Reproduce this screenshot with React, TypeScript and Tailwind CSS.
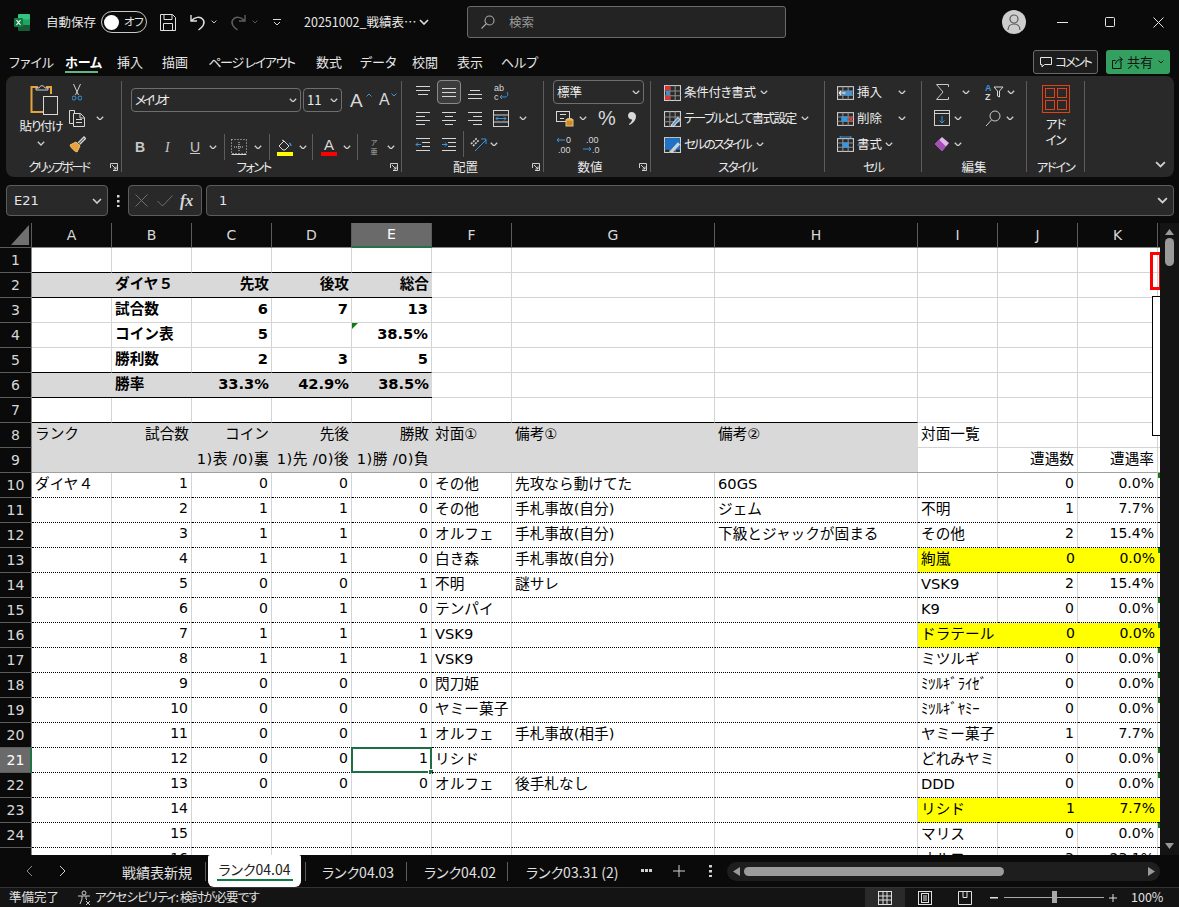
import React from 'react';

const LINE = '#d6d6d6';
const BLUE = '#3a96dd';

function Chev({ className = '', color = '#d0d0d0', w = 8 }: { className?: string; color?: string; w?: number }) {
  return (
    <svg width={w} height={w * 0.6} viewBox="0 0 10 6" className={`shrink-0 ${className}`} fill="none" stroke={color} strokeWidth="1.6">
      <path d="M1 1l4 4 4-4" />
    </svg>
  );
}

function I({ children, size = 16, className = '' }: { children: React.ReactNode; size?: number; className?: string }) {
  return (
    <svg width={size} height={size} viewBox="0 0 16 16" fill="none" stroke={LINE} strokeWidth="1" className={`shrink-0 ${className}`}>
      {children}
    </svg>
  );
}

function Launcher() {
  return (
    <svg width="8" height="8" viewBox="0 0 8 8" fill="none" stroke="#d0d0d0" className="absolute right-[3px] top-[6px]">
      <path d="M.5 5V.5H7.5V7.5H3M2 2l4 4M6 3.5V6H3.5" />
    </svg>
  );
}

function Sep({ className = '' }: { className?: string }) {
  return <div className={`w-px bg-[#5c5c5c] shrink-0 ${className}`} />;
}

function Group({ w, label, ls = '', launcher, children }: { w: string; label: string; ls?: string; launcher?: boolean; children: React.ReactNode }) {
  return (
    <div className={`flex shrink-0 ${w}`}>
      <div className="flex flex-col flex-1 min-w-0">
        <div className="h-[81px] pt-[3px] flex flex-col">{children}</div>
        <div className="h-[20px] relative flex items-center justify-center text-[12.5px] text-[#e8e8e8]">
          <span className={ls}>{label}</span>
          {launcher && <Launcher />}
        </div>
      </div>
      <Sep className="my-[5px]" />
    </div>
  );
}

function Row({ children, className = '' }: { children: React.ReactNode; className?: string }) {
  return <div className={`flex items-center h-[26px] shrink-0 ${className}`}>{children}</div>;
}

function AlignIcon({ y, x }: { y: number[]; x: [number, number][] }) {
  return (
    <I size={16}>
      {y.map((v, i) => (
        <path key={i} d={`M${x[i][0]} ${v}.5H${x[i][1]}`} />
      ))}
    </I>
  );
}

function Slot({ children }: { children: React.ReactNode }) {
  return <div className="w-[26px] flex items-center justify-center shrink-0">{children}</div>;
}

function CondIcon({ kind }: { kind: number }) {
  return (
    <I size={17}>
      <rect x=".5" y="1.5" width="15" height="14" stroke="#cfcfcf" />
      <path d="M5.5 1.5v14M10.5 1.5v14M.5 6.5h15M.5 11h15" stroke="#8f8f8f" />
      {kind === 0 && <><rect x="1" y="2" width="5" height="4" fill="#e03535" stroke="none" /><rect x="1" y="11" width="5" height="4" fill="#e03535" stroke="none" /><rect x="2" y="6.5" width="3" height="4" fill={BLUE} stroke="none" /></>}
      {kind === 1 && <><path d="M7 14l6-7 2 2-6 6H7z" fill={BLUE} stroke="#d8d8d8" /></>}
      {kind === 2 && <><rect x="1" y="2" width="14" height="11" fill="#1f72c4" stroke="none" /><path d="M6 14.5l7-8 1.5 1.5-6.5 7z" fill="#b8d4ee" stroke="#d8d8d8" /></>}
    </I>
  );
}

function CellIcon({ kind }: { kind: number }) {
  return (
    <I size={17}>
      <rect x=".5" y="2.5" width="15" height="12" stroke="#cfcfcf" />
      <path d="M.5 6.5h15M.5 10.5h15M5.5 2.5v12M10.5 2.5v12" stroke="#8f8f8f" />
      {kind === 0 && <><rect x="5.5" y="6.5" width="9" height="4" fill={BLUE} stroke="none" /><path d="M8 8.5H2M4 6.5l-2 2 2 2" stroke="#fff" /></>}
      {kind === 1 && <><rect x="4" y="6" width="6" height="5" fill={BLUE} stroke="none" /><path d="M11 6.5l4 4M15 6.5l-4 4" stroke="#e0433b" strokeWidth="1.4" /></>}
      {kind === 2 && <><rect x="5" y="6" width="6" height="5" fill={BLUE} stroke="none" /><path d="M3 1h10M3 0v2M13 0v2" stroke={BLUE} /></>}
    </I>
  );
}

function Excel() {
  return (
    <svg width="16" height="17" viewBox="0 0 16 17" className="ml-[14px] shrink-0">
      <rect x="4" y="0" width="12" height="6" rx="1" fill="#33c481" />
      <rect x="4" y="5.5" width="12" height="6" fill="#21a366" />
      <rect x="4" y="11" width="12" height="6" rx="1" fill="#185c37" />
      <rect x="0" y="4" width="9" height="9" rx="1" fill="#107c41" />
      <path d="M2.5 6l4 5M6.5 6l-4 5" stroke="#fff" strokeWidth="1.2" />
    </svg>
  );
}

function TitleBar() {
  return (
    <div className="h-[44px] flex items-center text-[#e6e6e6] text-[12.5px] shrink-0">
      <Excel />
      <span className="ml-[16px] w-[48px] whitespace-nowrap">自動保存</span>
      <div className="ml-[7px] w-[46px] h-[22px] rounded-full border border-[#c8c8c8] flex items-center pl-[2px] shrink-0">
        <div className="w-[15px] h-[15px] rounded-full bg-white" />
        <span className="ml-[5px] text-[11.5px] tracking-[-0.5px] leading-none whitespace-nowrap">オフ</span>
      </div>
      <svg width="16" height="17" viewBox="0 0 16 17" fill="none" stroke="#e0e0e0" className="ml-[13px]">
        <path d="M.5.5h12l3 3v13H.5zM4 .5v5h8v-5M3.5 16.5v-7h9v7" />
      </svg>
      <svg width="16" height="17" viewBox="0 0 16 17" fill="none" stroke="#e0e0e0" strokeWidth="1.4" className="ml-[14px]">
        <path d="M1 1v6h6M1.500 6.500C5 3 10 2 13 5.500c3 4-1 8-4.500 10.500" />
      </svg>
      <Chev className="ml-[5px]" w={6} />
      <svg width="16" height="17" viewBox="0 0 16 17" fill="none" stroke="#5e5e5e" strokeWidth="1.4" className="ml-[13px]">
        <path d="M15 1v6H9M14.500 6.500C11 3 6 2 3 5.500c-3 4 1 8 4.500 10.500" />
      </svg>
      <Chev className="ml-[6px]" w={6} color="#5e5e5e" />
      <svg width="8" height="7" viewBox="0 0 8 7" fill="none" stroke="#d8d8d8" className="ml-[15px]">
        <path d="M0 .5h8M1 3l3 3 3-3" />
      </svg>
      <span className="ml-[23px] w-[109px] whitespace-nowrap text-[12.5px]">20251002_戦績表…</span>
      <Chev className="ml-[6px]" w={10} color="#e0e0e0" />
      <div className="ml-[38px] w-[319px] h-[32px] rounded-[3px] border border-[#6a6a6a] bg-[#232323] flex items-center shrink-0">
        <svg width="14" height="14" viewBox="0 0 14 14" fill="none" stroke="#a8a8a8" strokeWidth="1.1" className="ml-[13px]">
          <circle cx="8.500" cy="5.500" r="4.500" /><path d="M5 9l-4.500 4.500" />
        </svg>
        <span className="ml-[14px] text-[#9a9a9a]">検索</span>
      </div>
      <div className="ml-[216px] w-[24px] h-[24px] rounded-full bg-[#cdcdcd] flex items-center justify-center shrink-0">
        <svg width="14" height="17" viewBox="0 0 14 17" fill="none" stroke="#5a5a5a" strokeWidth="1.2">
          <circle cx="7" cy="5" r="4" /><path d="M1 16c0-4 3-6 6-6s6 2 6 6" />
        </svg>
      </div>
      <svg width="11" height="1" viewBox="0 0 11 1" className="ml-[31px]"><rect width="11" height="1" fill="#e6e6e6" /></svg>
      <svg width="10" height="10" viewBox="0 0 10 10" fill="none" stroke="#e6e6e6" className="ml-[37px]"><rect x=".5" y=".5" width="9" height="9" rx="1" /></svg>
      <svg width="11" height="11" viewBox="0 0 11 11" fill="none" stroke="#e6e6e6" className="ml-[38px]"><path d="M.5.5l10 10M10.500.5l-10 10" /></svg>
    </div>
  );
}

function MenuBar() {
  const items: [string, string][] = [
    ['ファイル', 'ml-[9px] w-[38px]'],
    ['ホーム', 'ml-[18px] w-[33px]'],
    ['挿入', 'ml-[19px] w-[26px]'],
    ['描画', 'ml-[19px] w-[26px]'],
    ['ページ レイアウト', 'ml-[20px] w-[87px] tracking-[-1.3px]'],
    ['数式', 'ml-[21px] w-[26px]'],
    ['データ', 'ml-[18px] w-[33px]'],
    ['校閲', 'ml-[19px] w-[26px]'],
    ['表示', 'ml-[19px] w-[26px]'],
    ['ヘルプ', 'ml-[18px] w-[34px]'],
  ];
  return (
    <div className="h-[32px] flex items-center pt-[4px] text-[#e6e6e6] text-[13px] shrink-0">
      {items.map(([t, c]) => (
        <div key={t} className={`${c} relative text-center whitespace-nowrap shrink-0 ${t === 'ホーム' ? 'font-bold text-white' : ''}`}>
          {t}
          {t === 'ホーム' && <div className="absolute left-0 right-0 top-[19px] h-[2px] bg-[#62b67f]" />}
        </div>
      ))}
      <div className="ml-[498px] w-[65px] h-[24px] rounded-[3px] border border-[#6a6a6a] bg-[#1c1c1c] flex items-center justify-center gap-[3px] text-[12.5px] shrink-0">
        <svg width="12" height="12" viewBox="0 0 12 12" fill="none" stroke="#e6e6e6"><path d="M.5 1.500h11v7h-7l-2.500 2.500v-2.500h-1.500z" /></svg>
        <span className="tracking-[-2px]">コメント</span>
      </div>
      <div className="ml-[8px] w-[64px] h-[24px] rounded-[3px] bg-[#33a060] flex items-center justify-center gap-[3px] text-[13px] text-[#111] shrink-0">
        <svg width="12" height="13" viewBox="0 0 12 13" fill="none" stroke="#111"><path d="M9 5.500v7H.5v-8h3M3.500 8C4 5 6 3.500 9.500 3.500M7.500 1l3 2.500-3 2.500" /></svg>
        共有
        <Chev w={6} color="#111" className="ml-[2px]" />
      </div>
    </div>
  );
}

function Ribbon() {
  return (
    <div className="ml-[6px] w-[1168px] h-[101px] rounded-[8px] bg-[#292929] flex text-[12.5px] text-[#ececec] shrink-0 relative">
      <Group w="w-[116px]" label="クリップボード" ls="tracking-[-2.4px] mr-[10px]" launcher>
        <div className="flex">
          <div className="ml-[8px] w-[54px] flex flex-col items-center">
            <svg width="28" height="31" viewBox="0 0 28 31" fill="none" className="mt-[5px] ml-[5px]">
              <path d="M8 3H1.500v25H13" stroke="#e8a33d" strokeWidth="2" />
              <path d="M16 3h5v7" stroke="#e8a33d" strokeWidth="2" />
              <path d="M6 6V4h3c1-3 5-3 6 0h3v2z" stroke="#cfcfcf" />
              <rect x="13.500" y="12.500" width="14" height="18" stroke="#d8d8d8" fill="#292929" />
            </svg>
            <span className="mt-[2px] whitespace-nowrap leading-[18px] tracking-[-1.2px]">貼り付け</span>
            <Chev className="mt-[6px]" w={8} />
          </div>
          <div className="flex flex-col">
            <Row>
              <svg width="10" height="17" viewBox="0 0 10 17" fill="none" stroke="#d0d0d0" className="ml-[4px]">
                <path d="M1.500 0l5 11M8.500 0l-5 11" /><circle cx="2" cy="14" r="2" stroke={BLUE} /><circle cx="8" cy="14" r="2" stroke={BLUE} />
              </svg>
            </Row>
            <Row>
              <svg width="17" height="17" viewBox="0 0 17 17" fill="none" stroke="#d8d8d8" className="ml-[1px]">
                <path d="M4.500 13.500h-4V.5h5v3" /><path d="M4.500 3.500h7l4 4v9h-11zM11 3.500v4.500h4.500M7 9.500h6M7 12.500h6" />
              </svg>
              <Chev className="ml-[10px]" />
            </Row>
            <Row>
              <svg width="17" height="17" viewBox="0 0 17 17" fill="none" className="ml-[1px]">
                <path d="M1 9l6-3 4 4-3 6C5 15 2 12 1 9z" fill="#e8a33d" stroke="#f0c070" />
                <path d="M9 7l6-6 1.500 1.500-6 6" stroke="#d8d8d8" strokeWidth="1.4" />
              </svg>
            </Row>
          </div>
        </div>
      </Group>

      <Group w="w-[280px]" label="フォント" ls="tracking-[-1.7px] mr-[16px]" launcher>
        <div className="flex items-center mt-[9px] h-[24px] shrink-0">
          <div className="ml-[9px] w-[170px] h-[24px] rounded-[4px] border border-[#6e6e6e] flex items-center justify-between px-[3px] shrink-0">
            <span className="tracking-[-3px]">メイリオ</span><Chev />
          </div>
          <div className="ml-[2px] w-[39px] h-[24px] rounded-[4px] border border-[#6e6e6e] flex items-center justify-between pl-[3px] pr-[3px] shrink-0">
            <span className="text-[13px]">11</span><Chev />
          </div>
          <div className="ml-[8px] w-[17px] relative text-[19px] leading-none [font-family:'Liberation_Sans',sans-serif] text-[#d8d8d8]">A
            <svg width="6" height="4" viewBox="0 0 6 4" fill="none" stroke={BLUE} className="absolute -right-[5px] top-[2px]"><path d="M.5 3.500L3 1l2.500 2.500" /></svg>
          </div>
          <div className="ml-[12px] w-[13px] relative text-[16px] leading-none [font-family:'Liberation_Sans',sans-serif] text-[#d8d8d8]">A
            <svg width="6" height="4" viewBox="0 0 6 4" fill="none" stroke={BLUE} className="absolute -right-[5px] top-[1px]"><path d="M.5.5L3 3l2.500-2.500" /></svg>
          </div>
        </div>
        <div className="flex items-center h-[24px] mt-[23px] [font-family:'Liberation_Sans',sans-serif] text-[#c8c8c8] shrink-0">
          <span className="ml-[13px] w-[9px] text-[14px] font-bold">B</span>
          <span className="ml-[21px] w-[8px] text-[14px] italic [font-family:'Liberation_Serif',serif]">I</span>
          <span className="ml-[17px] w-[10px] text-[14px] underline">U</span>
          <Chev className="ml-[9px]" />
          <Sep className="h-[26px] ml-[7px]" />
          <svg width="16" height="16" viewBox="0 0 16 16" fill="none" stroke="#d8d8d8" className="ml-[6px]">
            <path d="M.5.500h15v14h-15z" strokeDasharray="1 2" /><path d="M.5 15.500h15" /><path d="M8 3v10M3 8h10" strokeDasharray="1 1" />
          </svg>
          <Chev className="ml-[7px]" />
          <Sep className="h-[26px] ml-[7px]" />
          <div className="ml-[7px] w-[16px] flex flex-col items-center">
            <svg width="16" height="13" viewBox="0 0 16 13" fill="none" stroke="#d8d8d8"><path d="M2 7l5-5 5 5-4 4H6zM5 1l2 1" /><path d="M12.500 4c1 1 1.500 2 1.500 3" stroke={BLUE} strokeWidth="1.4" /></svg>
            <div className="w-[16px] h-[4px] bg-[#ffff00]" />
          </div>
          <Chev className="ml-[6px]" />
          <Sep className="h-[26px] ml-[5px]" />
          <div className="ml-[8px] w-[16px] flex flex-col items-center text-[15px] leading-[13px] text-[#d8d8d8]">
            A<div className="w-[16px] h-[4px] bg-[#ff0000] mt-[1px]" />
          </div>
          <Chev className="ml-[6px]" />
          <Sep className="h-[26px] ml-[6px]" />
          <div className="ml-[9px] w-[14px] flex flex-col items-center text-[7px] text-[#a8a8a8] [font-family:'Noto_Sans_CJK_JP',sans-serif]">
            <span className="h-[9px] leading-[9px]">ア</span><span className="h-[9px] leading-[9px]">亜</span>
          </div>
          <Chev className="ml-[6px]" />
        </div>
      </Group>

      <Group w="w-[142px]" label="配置" ls="mr-[14px]" launcher>
        <Row className="pl-[8px]">
          <Slot><AlignIcon y={[2, 6, 10]} x={[[1, 15], [1, 15], [3, 13]]} /></Slot>
          <Slot>
            <div className="w-[24px] h-[24px] rounded-[4px] border border-[#8a8a8a] bg-[#3c3c3c] flex items-center justify-center"><AlignIcon y={[4, 8, 12]} x={[[1, 15], [1, 15], [1, 15]]} /></div>
          </Slot>
          <Slot><AlignIcon y={[6, 10, 14]} x={[[3, 13], [1, 15], [1, 15]]} /></Slot>
          <Slot>
            <svg width="16" height="18" viewBox="0 0 16 18" fill="none">
              <text x="1" y="8" fontSize="9" fill="#d8d8d8" stroke="none" fontFamily="Liberation Sans">ab</text>
              <text x="1" y="17" fontSize="9" fill="#d8d8d8" stroke="none" fontFamily="Liberation Sans">c</text>
              <path d="M14 9c2 3 0 5-2 5H7M9 12l-2 2 2 2" stroke={BLUE} />
            </svg>
          </Slot>
        </Row>
        <Row className="pl-[8px]">
          <Slot><AlignIcon y={[2, 6, 10, 14]} x={[[1, 15], [1, 10], [1, 15], [1, 10]]} /></Slot>
          <Slot><AlignIcon y={[2, 6, 10, 14]} x={[[1, 15], [4, 12], [1, 15], [4, 12]]} /></Slot>
          <Slot><AlignIcon y={[2, 6, 10, 14]} x={[[1, 15], [6, 15], [1, 15], [6, 15]]} /></Slot>
          <Slot>
            <svg width="16" height="17" viewBox="0 0 16 17" fill="none" stroke="#d0d0d0">
              <rect x=".5" y=".5" width="15" height="16" /><path d="M.5 5h15M.5 12h15" />
              <path d="M3 8.500h10M5 6.500l-2 2 2 2M11 6.500l2 2-2 2" stroke={BLUE} />
            </svg>
          </Slot>
          <Chev className="ml-[5px]" />
        </Row>
        <Row className="pl-[8px]">
          <Slot><I><path d="M1 2.500h14M7 6.500h8M7 10.500h8M1 14.500h14" /><path d="M6 8.500H1M3 6.500l-2 2 2 2" stroke={BLUE} /></I></Slot>
          <Slot><I><path d="M1 2.500h14M7 6.500h8M7 10.500h8M1 14.500h14" /><path d="M1 8.500h5M4 6.500l2 2-2 2" stroke={BLUE} /></I></Slot>
          <Sep className="h-[26px] ml-[1px]" />
          <svg width="17" height="17" viewBox="0 0 17 17" fill="none" className="ml-[6px]">
            <path d="M1 8l6-6M3 10l6-6" stroke="#d0d0d0" strokeWidth="1.6" strokeDasharray="2 1" />
            <path d="M5 15L16 4M11 3h5v5" stroke={BLUE} />
          </svg>
          <Chev className="ml-[3px]" />
        </Row>
      </Group>

      <Group w="w-[107px]" label="数値" ls="mr-[14px]" launcher>
        <div className="ml-[9px] mt-[1px] w-[91px] h-[24px] rounded-[4px] border border-[#6e6e6e] flex items-center justify-between px-[3px] shrink-0">
          <span>標準</span><Chev />
        </div>
        <Row className="mt-[1px]">
          <svg width="18" height="17" viewBox="0 0 18 17" fill="none" stroke="#d8d8d8" className="ml-[12px]">
            <rect x=".5" y="1.500" width="13" height="10" /><path d="M4 4.500h6M4 8.500h4" />
            <ellipse cx="13.500" cy="10" rx="3.500" ry="1.500" fill="#e8a33d" stroke="#f0c070" /><rect x="10" y="10" width="7" height="6" fill="#c88a30" stroke="#f0c070" />
          </svg>
          <Chev className="ml-[5px]" />
          <span className="ml-[11px] text-[20px] leading-none text-[#d8d8d8] [font-family:'Liberation_Sans',sans-serif] w-[18px]">%</span>
          <svg width="8" height="13" viewBox="0 0 8 13" className="ml-[12px]"><path d="M3.500 0C6 0 8 1.500 8 4.500 8 8 5 11.500 1.500 13L1 12c2-1.500 3-3 3-4.500C2 7.500 0 6 0 3.800 0 1.500 1.500 0 3.500 0z" fill="#d8d8d8" /></svg>
        </Row>
        <Row>
          <svg width="18" height="19" viewBox="0 0 18 19" fill="none" className="ml-[12px]">
            <text x="10" y="8" fontSize="9" fill="#d8d8d8" fontFamily="Liberation Sans">0</text>
            <text x="2" y="18" fontSize="9" fill="#d8d8d8" fontFamily="Liberation Sans">.00</text>
            <path d="M9 5H1M3 3L1 5l2 2" stroke={BLUE} />
          </svg>
          <svg width="18" height="19" viewBox="0 0 18 19" fill="none" className="ml-[9px]">
            <text x="3" y="8" fontSize="9" fill="#d8d8d8" fontFamily="Liberation Sans">.00</text>
            <text x="9" y="18" fontSize="9" fill="#d8d8d8" fontFamily="Liberation Sans">.0</text>
            <path d="M0 14h8M6 12l2 2-2 2" stroke={BLUE} />
          </svg>
        </Row>
      </Group>

      <Group w="w-[174px]" label="スタイル" ls="tracking-[-1.5px]">
        <Row className="pl-[13px]"><CondIcon kind={0} /><span className="ml-[3px] whitespace-nowrap tracking-[-0.3px]">条件付き書式</span><Chev className="ml-[4px]" /></Row>
        <Row className="pl-[13px]"><CondIcon kind={1} /><span className="ml-[3px] whitespace-nowrap tracking-[-1.5px]">テーブルとして書式設定</span><Chev className="ml-[5px]" /></Row>
        <Row className="pl-[13px]"><CondIcon kind={2} /><span className="ml-[3px] whitespace-nowrap tracking-[-2px]">セルのスタイル</span><Chev className="ml-[5px]" /></Row>
      </Group>

      <Group w="w-[97px]" label="セル" ls="tracking-[-2px]">
        <Row className="pl-[12px]"><CellIcon kind={0} /><span className="ml-[3px] w-[26px] whitespace-nowrap">挿入</span><Chev className="ml-[15px]" /></Row>
        <Row className="pl-[12px]"><CellIcon kind={1} /><span className="ml-[3px] w-[26px] whitespace-nowrap">削除</span><Chev className="ml-[15px]" /></Row>
        <Row className="pl-[12px]"><CellIcon kind={2} /><span className="ml-[3px] w-[26px] whitespace-nowrap">書式</span><Chev className="ml-[2px]" /></Row>
      </Group>

      <Group w="w-[105px]" label="編集">
        <Row>
          <svg width="13" height="16" viewBox="0 0 13 16" fill="none" stroke="#c8c8c8" className="ml-[14px]"><path d="M12.500 3V.5H.5L7 8l-6.500 7.500h12V13" /></svg>
          <Chev className="ml-[13px]" />
          <svg width="20" height="18" viewBox="0 0 20 18" fill="none" className="ml-[15px]">
            <text x="0" y="8" fontSize="9" fontWeight="700" fill={BLUE} fontFamily="Liberation Sans">A</text>
            <text x="0" y="17" fontSize="9" fontWeight="700" fill="#d8d8d8" fontFamily="Liberation Sans">Z</text>
            <path d="M9 4h9l-3.500 4v6l-2-1V8z" stroke="#d8d8d8" />
          </svg>
          <Chev className="ml-[2px]" />
        </Row>
        <Row>
          <svg width="16" height="16" viewBox="0 0 16 16" fill="none" stroke="#d0d0d0" className="ml-[12px]"><rect x=".5" y=".5" width="15" height="15" /><path d="M.5 3.500h15" /><path d="M8 6v7M5.500 10.500L8 13l2.500-2.500" stroke={BLUE} /></svg>
          <Chev className="ml-[4px]" />
          <svg width="16" height="17" viewBox="0 0 16 17" fill="none" stroke="#c8c8c8" className="ml-[23px]"><circle cx="10" cy="6" r="5" /><path d="M6.500 10L1 16" /></svg>
          <Chev className="ml-[5px]" />
        </Row>
        <Row>
          <svg width="16" height="16" viewBox="0 0 16 16" className="ml-[12px]"><path d="M8 1l7 6-7 8-7-7z" fill="#e4b6ee" /><path d="M1 8l4-4.500 7 7L8 15z" fill="#a64fb8" /></svg>
          <Chev className="ml-[4px]" />
        </Row>
      </Group>

      <Group w="w-[58px]" label="アドイン" ls="tracking-[-1.5px]">
        <div className="flex flex-col items-center">
          <svg width="28" height="28" viewBox="0 0 28 28" fill="none" stroke="#e0431a" className="mt-[6px]">
            <rect x=".5" y=".5" width="27" height="27" /><rect x="3.500" y="3.500" width="9" height="9" /><rect x="15.500" y="3.500" width="9" height="9" /><rect x="3.500" y="15.500" width="9" height="9" /><rect x="15.500" y="15.500" width="9" height="9" />
          </svg>
          <span className="mt-[3px] h-[16px] leading-[16px] tracking-[-1px]">アド</span>
          <span className="h-[16px] leading-[16px] tracking-[-1px]">イン</span>
        </div>
      </Group>
      <Chev className="absolute left-[1149px] top-[85px]" w={11} />
    </div>
  );
}

function FormulaBar() {
  return (
    <div className="mt-[8px] h-[31px] flex items-stretch text-[#e6e6e6] shrink-0 [font-family:'DejaVu_Sans','Noto_Sans_CJK_JP',sans-serif]">
      <div className="ml-[6px] w-[102px] rounded-[4px] border border-[#5c5c5c] bg-[#292929] flex items-center justify-between pl-[7px] pr-[5px] text-[13px]">
        E21<Chev w={10} />
      </div>
      <div className="w-[20px] flex items-center justify-center">
        <svg width="3" height="12" viewBox="0 0 3 12" fill="#d8d8d8"><rect width="2.500" height="2.500" /><rect y="5" width="2.500" height="2.500" /><rect y="10" width="2.500" height="2.500" /></svg>
      </div>
      <div className="w-[74px] rounded-[4px] border border-[#5c5c5c] bg-[#292929] flex items-center">
        <svg width="13" height="13" viewBox="0 0 13 13" fill="none" stroke="#6e6e6e" className="ml-[6px]"><path d="M.5.5l12 12M12.500.5l-12 12" /></svg>
        <svg width="16" height="12" viewBox="0 0 16 12" fill="none" stroke="#6e6e6e" className="ml-[9px]"><path d="M.5 6l5 5L15.500.5" /></svg>
        <span className="ml-[7px] text-[16px] font-bold italic text-[#d8d8d8] [font-family:'Liberation_Serif',serif]">fx</span>
      </div>
      <div className="ml-[4px] w-[968px] rounded-[4px] border border-[#5c5c5c] bg-[#292929] flex items-center justify-between pl-[12px] pr-[5px] text-[13px]">
        1<Chev w={11} />
      </div>
    </div>
  );
}

const COLS = ['A', 'B', 'C', 'D', 'E', 'F', 'G', 'H', 'I', 'J', 'K'];
const W = ['w-[80px]', 'w-[80px]', 'w-[80px]', 'w-[80px]', 'w-[80px]', 'w-[80px]', 'w-[203px]', 'w-[203px]', 'w-[80px]', 'w-[80px]', 'w-[80px]'];

function HeaderRow() {
  return (
    <div className="flex h-[25px] text-[14px] text-[#d8d8d8] bg-[#0a0a0a] shrink-0">
      <div className="w-[32px] border-r border-b border-[#5c5c5c] flex items-end justify-end pr-[2px] pb-[2px]">
        <svg width="18" height="20" viewBox="0 0 18 20"><path d="M18 0v20H0z" fill="#707070" /></svg>
      </div>
      {COLS.map((c, i) => (
        <div key={c} className={`${W[i]} flex items-center justify-center ${c === 'E' ? 'bg-[#6a6a6a] text-white border-b-2 border-b-[#217346]' : 'border-b border-[#8a8a8a]'} border-r border-r-[#5c5c5c] shrink-0`}>
          {c}
        </div>
      ))}
      <div className="w-[2px] border-b border-[#8a8a8a] shrink-0" />
    </div>
  );
}

function RowHead({ n }: { n: number }) {
  const active = n === 21;
  return (
    <div className={`w-[32px] h-full shrink-0 flex items-center justify-center text-[14px] border-b border-b-[#5c5c5c] ${active ? 'bg-[#6a6a6a] text-white border-r-2 border-r-[#217346] pl-[1px]' : 'bg-[#0a0a0a] text-[#d8d8d8] border-r border-r-[#8a8a8a]'}`}>
      {n}
    </div>
  );
}

type CellP = { w: string; t?: string; right?: boolean; bold?: boolean; cls: string; num?: boolean; children?: React.ReactNode };

function Cell({ w, t, right, bold, cls, num, children }: CellP) {
  return (
    <div className={`${w} h-full shrink-0 relative flex items-center whitespace-nowrap px-[3px] pb-[3px] ${right ? 'justify-end' : ''} ${bold ? 'font-bold' : ''} ${num ? 'text-[14px]' : 'text-[14.67px]'} ${cls}`}>
      {t}
      {children}
    </div>
  );
}

const GRID = 'border-r border-b border-[#d4d4d4]';
const BLACK = 'border-r border-r-[#d4d4d4] border-b border-b-black';
const RH = 'flex h-[25px] shrink-0';

function Summary({ n, v, gray, topBlack }: { n: number; v: string[]; gray?: boolean; topBlack?: boolean }) {
  const cls = gray ? 'bg-[#d9d9d9] border-b border-b-black' : topBlack ? BLACK : GRID;
  return (
    <div className={RH}>
      <RowHead n={n} />
      <Cell w={W[0]} cls={cls} />
      <Cell w={W[1]} t={v[0]} bold cls={cls} />
      <Cell w={W[2]} t={v[1]} bold right cls={cls} />
      <Cell w={W[3]} t={v[2]} bold right cls={cls} />
      <Cell w={W[4]} t={v[3]} bold right cls={cls}>
        {n === 4 && (
          <svg width="6" height="6" viewBox="0 0 6 6" className="absolute left-0 top-0"><path d="M0 0h6L0 6z" fill="#0f7b0f" /></svg>
        )}
      </Cell>
      {W.slice(5).map((w, i) => <Cell key={i} w={w} cls={GRID} />)}
      <div className="w-[2px] shrink-0 border-b border-[#d4d4d4]" />
    </div>
  );
}

function Blank({ n, blackCols }: { n: number; blackCols: number }) {
  return (
    <div className={RH}>
      <RowHead n={n} />
      {W.map((w, i) => <Cell key={i} w={w} cls={i < blackCols ? BLACK : GRID} />)}
      <div className="w-[2px] shrink-0 border-b border-[#d4d4d4]" />
    </div>
  );
}

function Head8() {
  const g = 'bg-[#d9d9d9]';
  const bot = 'border-r border-r-[#d4d4d4] border-b border-b-[#a0a0a0]';
  return (
    <>
      <div className={RH}>
        <RowHead n={8} />
        <Cell w={W[0]} t="ランク" cls={g} />
        <Cell w={W[1]} t="試合数" right cls={g} />
        <Cell w={W[2]} t="コイン" right cls={g} />
        <Cell w={W[3]} t="先後" right cls={g} />
        <Cell w={W[4]} t="勝敗" right cls={g} />
        <Cell w={W[5]} t="対面①" cls={g} />
        <Cell w={W[6]} t="備考①" cls={g} />
        <Cell w={W[7]} t="備考②" cls={g} />
        <Cell w={W[8]} t="対面一覧" cls={GRID} />
        <Cell w={W[9]} cls={GRID} />
        <Cell w={W[10]} cls={GRID} />
        <div className="w-[2px] shrink-0 border-b border-[#d4d4d4]" />
      </div>
      <div className={RH}>
        <RowHead n={9} />
        {['', '', '1)表 /0)裏', '1)先 /0)後', '1)勝 /0)負', '', '', ''].map((t, i) => (
          <Cell key={i} w={W[i]} t={t} right cls={`${g} border-b border-b-[#a0a0a0] tracking-[0.4px]`} />
        ))}
        <Cell w={W[8]} cls={bot} />
        <Cell w={W[9]} t="遭遇数" right cls={bot} />
        <Cell w={W[10]} t="遭遇率" right cls={bot} />
        <div className="w-[2px] shrink-0 border-b border-[#a0a0a0]" />
      </div>
    </>
  );
}

type D = [string, string, string, string, string, string, string, string, string, string, string];
const DATA: D[] = [
  ['ダイヤ４', '1', '0', '0', '0', 'その他', '先攻なら動けてた', '60GS', '', '0', '0.0%'],
  ['', '2', '1', '1', '0', 'その他', '手札事故(自分)', 'ジェム', '不明', '1', '7.7%'],
  ['', '3', '1', '1', '0', 'オルフェ', '手札事故(自分)', '下級とジャックが固まる', 'その他', '2', '15.4%'],
  ['', '4', '1', '1', '0', '白き森', '手札事故(自分)', '', '絢嵐', '0', '0.0%'],
  ['', '5', '0', '0', '1', '不明', '謎サレ', '', 'VSK9', '2', '15.4%'],
  ['', '6', '0', '1', '0', 'テンパイ', '', '', 'K9', '0', '0.0%'],
  ['', '7', '1', '1', '1', 'VSK9', '', '', 'ドラテール', '0', '0.0%'],
  ['', '8', '1', '1', '1', 'VSK9', '', '', 'ミツルギ', '0', '0.0%'],
  ['', '9', '0', '0', '0', '閃刀姫', '', '', 'ﾐﾂﾙｷﾞﾗｲｾﾞ', '0', '0.0%'],
  ['', '10', '0', '0', '0', 'ヤミー菓子', '', '', 'ﾐﾂﾙｷﾞﾔﾐｰ', '0', '0.0%'],
  ['', '11', '0', '0', '1', 'オルフェ', '手札事故(相手)', '', 'ヤミー菓子', '1', '7.7%'],
  ['', '12', '0', '0', '1', 'リシド', '', '', 'どれみヤミ', '0', '0.0%'],
  ['', '13', '0', '0', '0', 'オルフェ', '後手札なし', '', 'DDD', '0', '0.0%'],
  ['', '14', '', '', '', '', '', '', 'リシド', '1', '7.7%'],
  ['', '15', '', '', '', '', '', '', 'マリス', '0', '0.0%'],
  ['', '16', '', '', '', '', '', '', 'オルフェ', '3', '23.1%'],
];
const YELLOW = [13, 16, 23];
const MARK = [10, 13, 15, 16, 17, 18, 19, 21, 22, 24];

function DataRow({ n, d }: { n: number; d: D }) {
  const y = YELLOW.includes(n);
  const base = 'border-r border-r-[#d4d4d4] border-b border-b-black [border-bottom-style:dotted]!';
  const hi = 'bg-[#ffff00] border-b border-b-black [border-bottom-style:dotted]!';
  return (
    <div className={RH}>
      <RowHead n={n} />
      {d.map((t, i) => {
        const isNum = (i >= 1 && i <= 4) || i >= 9;
        return (
          <Cell key={i} w={W[i]} t={t} right={isNum} num={isNum} cls={i >= 8 && y ? hi : base}>
            {n === 21 && i === 4 && (
              <div className="absolute -left-[1px] -top-[1px] w-[81px] h-[26px] border-2 border-[#1f6e43]">
                <div className="absolute -right-[4px] -bottom-[4px] w-[6px] h-[6px] bg-[#1f6e43] border border-white" />
              </div>
            )}
          </Cell>
        );
      })}
      <div className={`w-[2px] shrink-0 border-b border-b-black [border-bottom-style:dotted]! ${y ? 'bg-[#ffff00]' : ''}`}>
        {MARK.includes(n) && <div className="w-[2px] h-[5px] bg-[#0f7b0f]" />}
      </div>
    </div>
  );
}

function Sheet() {
  return (
    <div className="mt-[7px] flex h-[632px] shrink-0 [font-feature-settings:normal]">
      <div className="w-[1160px] h-full flex flex-col bg-white text-black relative overflow-hidden [font-family:'DejaVu_Sans','Noto_Sans_CJK_JP',sans-serif]">
        <HeaderRow />
        <Blank n={1} blackCols={5} />
        <Summary n={2} v={['ダイヤ５', '先攻', '後攻', '総合']} gray />
        <Summary n={3} v={['試合数', '6', '7', '13']} />
        <Summary n={4} v={['コイン表', '5', '', '38.5%']} />
        <Summary n={5} v={['勝利数', '2', '3', '5']} topBlack />
        <Summary n={6} v={['勝率', '33.3%', '42.9%', '38.5%']} gray />
        <Blank n={7} blackCols={8} />
        <Head8 />
        {DATA.map((d, i) => <DataRow key={i} n={i + 10} d={d} />)}
        <div className="absolute left-[1150px] top-[29px] w-[12px] h-[38px] border-[3px] border-[#ff0000]" />
        <div className="absolute left-[1152px] top-[73px] w-[12px] h-[140px] border border-black bg-white" />
      </div>
      <div className="w-[19px] h-full bg-[#141414] flex flex-col items-center pt-[6px]">
        <svg width="9" height="6" viewBox="0 0 9 6"><path d="M4.500 0L9 6H0z" fill="#9a9a9a" /></svg>
        <div className="mt-[3px] w-[9px] h-[28px] rounded-full bg-[#9a9a9a]" />
        <div className="flex-1" />
        <svg width="9" height="6" viewBox="0 0 9 6" className="mb-[6px]"><path d="M4.500 6L9 0H0z" fill="#9a9a9a" /></svg>
      </div>
    </div>
  );
}

function TabSep({ className = '' }: { className?: string }) {
  return <div className={`w-px h-[19px] bg-[#5c5c5c] shrink-0 ${className}`} />;
}

function TabBar() {
  return (
    <div className="h-[32px] flex items-start text-[14px] text-[#e0e0e0] bg-[#0a0a0a] shrink-0">
      <svg width="7" height="12" viewBox="0 0 7 12" fill="none" stroke="#8a8a8a" className="ml-[26px] mt-[10px] shrink-0"><path d="M6 1L1 6l5 5" /></svg>
      <svg width="7" height="12" viewBox="0 0 7 12" fill="none" stroke="#d0d0d0" className="ml-[26px] mt-[10px] shrink-0"><path d="M1 1l5 5-5 5" /></svg>
      <span className="ml-[56px] mt-[7px] w-[71px] whitespace-nowrap">戦績表新規</span>
      <TabSep className="ml-[12px] mt-[7px]" />
      <div className="ml-[2px] w-[93px] h-[32px] bg-white rounded-b-[6px] rounded-t-[2px] flex flex-col items-center text-[#222] shrink-0">
        <span className="mt-[4px] leading-[20px] whitespace-nowrap">ランク04.04</span>
        <div className="w-[76px] h-[2px] bg-[#107c41]" />
      </div>
      <TabSep className="ml-[4px] mt-[7px]" />
      <span className="ml-[16px] mt-[7px] w-[70px] whitespace-nowrap">ランク04.03</span>
      <TabSep className="ml-[14px] mt-[7px]" />
      <span className="ml-[17px] mt-[7px] w-[70px] whitespace-nowrap">ランク04.02</span>
      <TabSep className="ml-[13px] mt-[7px]" />
      <span className="ml-[18px] mt-[7px] w-[96px] whitespace-nowrap">ランク03.31 (2)</span>
      <svg width="11" height="3" viewBox="0 0 11 3" fill="#d0d0d0" className="ml-[19px] mt-[14px] shrink-0"><rect width="3" height="3" /><rect x="4" width="3" height="3" /><rect x="8" width="3" height="3" /></svg>
      <svg width="12" height="12" viewBox="0 0 12 12" stroke="#d0d0d0" className="ml-[21px] mt-[10px] shrink-0"><path d="M6 0v12M0 6h12" /></svg>
      <svg width="3" height="12" viewBox="0 0 3 12" fill="#d0d0d0" className="ml-[24px] mt-[10px] shrink-0"><rect width="3" height="2.500" /><rect y="5" width="3" height="2.500" /><rect y="10" width="3" height="2.500" /></svg>
      <div className="ml-[15px] mt-[7px] w-[433px] h-[19px] rounded-full bg-[#1e1e1e] flex items-center pl-[6px] pr-[5px] shrink-0">
        <svg width="7" height="9" viewBox="0 0 7 9" className="shrink-0"><path d="M0 4.500L7 0v9z" fill="#9a9a9a" /></svg>
        <div className="ml-[4px] w-[260px] h-[9px] rounded-full bg-[#9c9c9c]" />
        <div className="flex-1" />
        <svg width="7" height="9" viewBox="0 0 7 9" className="shrink-0"><path d="M7 4.500L0 0v9z" fill="#9a9a9a" /></svg>
      </div>
    </div>
  );
}

function StatusBar() {
  return (
    <div className="h-[20px] border-t border-[#333] bg-[#141414] flex items-center text-[12.500px] text-[#e0e0e0] shrink-0">
      <span className="ml-[9px] w-[48px] whitespace-nowrap">準備完了</span>
      <svg width="15" height="15" viewBox="0 0 15 15" fill="none" stroke="#c8c8c8" className="ml-[20px] shrink-0">
        <circle cx="7" cy="3" r="2" /><path d="M1 6h12M5 6v3l-2 5M9 6v3l1 1M9 11l4 4M13 11l-4 4" />
      </svg>
      <span className="ml-[3px] whitespace-nowrap w-[163px] tracking-[-0.9px]">アクセシビリティ: 検討が必要です</span>
      <div className="ml-[607px] w-[40px] h-full bg-[#2a2a2a] flex items-center justify-center shrink-0">
        <svg width="14" height="14" viewBox="0 0 14 14" fill="none" stroke="#e0e0e0"><rect x=".5" y=".5" width="13" height="13" /><path d="M5 .5v13M9 .5v13M.5 5h13M.5 9h13" /></svg>
      </div>
      <svg width="14" height="14" viewBox="0 0 14 14" fill="none" stroke="#e0e0e0" className="ml-[13px] shrink-0"><rect x=".5" y=".5" width="13" height="13" /><rect x="3.500" y="2.500" width="7" height="9" /><path d="M5 5h4M5 7h4M5 9h4" /></svg>
      <svg width="14" height="14" viewBox="0 0 14 14" fill="none" stroke="#e0e0e0" className="ml-[26px] shrink-0"><path d="M.5 13.500V.5h13v13zM5 .5v6h4v-6" /></svg>
      <svg width="8" height="2" viewBox="0 0 8 2" className="ml-[18px] shrink-0"><rect width="8" height="1.500" fill="#e0e0e0" /></svg>
      <div className="ml-[6px] w-[100px] h-px bg-[#a8a8a8] relative shrink-0">
        <div className="absolute left-[48px] -top-[6px] w-[5px] h-[12px] bg-[#a8a8a8]" />
      </div>
      <svg width="8" height="8" viewBox="0 0 8 8" stroke="#e0e0e0" className="ml-[5px] shrink-0"><path d="M4 0v8M0 4h8" /></svg>
      <span className="ml-[14px] whitespace-nowrap">100%</span>
    </div>
  );
}

export default function App() {
  return (
    <div className="w-[1179px] h-[907px] overflow-hidden flex flex-col bg-[#0a0a0a] [font-family:'Noto_Sans_CJK_JP',sans-serif] [font-feature-settings:'palt']">
      <TitleBar />
      <MenuBar />
      <Ribbon />
      <FormulaBar />
      <Sheet />
      <TabBar />
      <StatusBar />
    </div>
  );
}
